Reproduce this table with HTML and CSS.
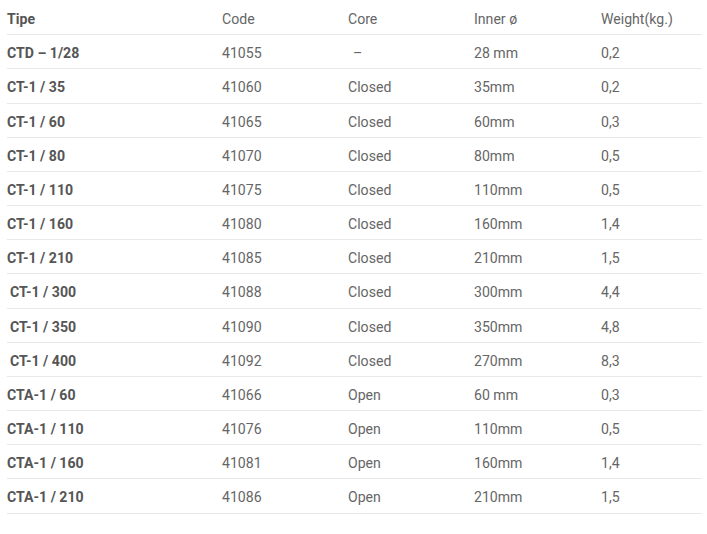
FILE: index.html
```html
<!DOCTYPE html>
<html>
<head>
<meta charset="utf-8">
<link rel="stylesheet" href="styles.css">
</head>
<body>
<div class="wrap">
<table class="spec">
  <colgroup>
    <col class="c1"><col class="c2"><col class="c3"><col class="c4"><col class="c5">
  </colgroup>
  <thead>
    <tr><th class="bold">Tipe</th><th>Code</th><th>Core</th><th>Inner ø</th><th>Weight(kg.)</th></tr>
  </thead>
  <tbody>
    <tr><td class="bold">CTD – 1/28</td><td>41055</td><td><span class="ind">–</span></td><td>28 mm</td><td>0,2</td></tr>
    <tr><td class="bold">CT-1 / 35</td><td>41060</td><td>Closed</td><td>35mm</td><td>0,2</td></tr>
    <tr><td class="bold">CT-1 / 60</td><td>41065</td><td>Closed</td><td>60mm</td><td>0,3</td></tr>
    <tr><td class="bold">CT-1 / 80</td><td>41070</td><td>Closed</td><td>80mm</td><td>0,5</td></tr>
    <tr><td class="bold">CT-1 / 110</td><td>41075</td><td>Closed</td><td>110mm</td><td>0,5</td></tr>
    <tr><td class="bold">CT-1 / 160</td><td>41080</td><td>Closed</td><td>160mm</td><td>1,4</td></tr>
    <tr><td class="bold">CT-1 / 210</td><td>41085</td><td>Closed</td><td>210mm</td><td>1,5</td></tr>
    <tr><td class="bold"><span class="ind2">CT-1 / 300</span></td><td>41088</td><td>Closed</td><td>300mm</td><td>4,4</td></tr>
    <tr><td class="bold"><span class="ind2">CT-1 / 350</span></td><td>41090</td><td>Closed</td><td>350mm</td><td>4,8</td></tr>
    <tr><td class="bold"><span class="ind2">CT-1 / 400</span></td><td>41092</td><td>Closed</td><td>270mm</td><td>8,3</td></tr>
    <tr><td class="bold">CTA-1 / 60</td><td>41066</td><td>Open</td><td>60 mm</td><td>0,3</td></tr>
    <tr><td class="bold">CTA-1 / 110</td><td>41076</td><td>Open</td><td>110mm</td><td>0,5</td></tr>
    <tr><td class="bold">CTA-1 / 160</td><td>41081</td><td>Open</td><td>160mm</td><td>1,4</td></tr>
    <tr><td class="bold">CTA-1 / 210</td><td>41086</td><td>Open</td><td>210mm</td><td>1,5</td></tr>
  </tbody>
</table>
</div>
</body>
</html>
```

FILE: styles.css
```css
html, body {
  margin: 0;
  padding: 0;
  background: #ffffff;
}
.wrap {
  padding: 1px 0 0 7px;
}
.spec {
  width: 695px;
  table-layout: fixed;
  border-collapse: collapse;
  font-family: Roboto, "Liberation Sans", sans-serif;
  font-size: 14.1px;
  color: #666666;
}
.c1 { width: 215px; }
.c2 { width: 126px; }
.c3 { width: 126px; }
.c4 { width: 127px; }
.c5 { width: 101px; }
.spec th, .spec td {
  padding: 3px 0 0 0;
  height: 30.17px;
  line-height: 30.17px;
  text-align: left;
  font-weight: 400;
  border-bottom: 1px solid #e8e8e8;
  white-space: nowrap;
  vertical-align: middle;
}
.spec .bold {
  font-weight: 700;
  color: #555555;
}
.ind { padding-left: 5px; }
.ind2 { padding-left: 3px; }
```
